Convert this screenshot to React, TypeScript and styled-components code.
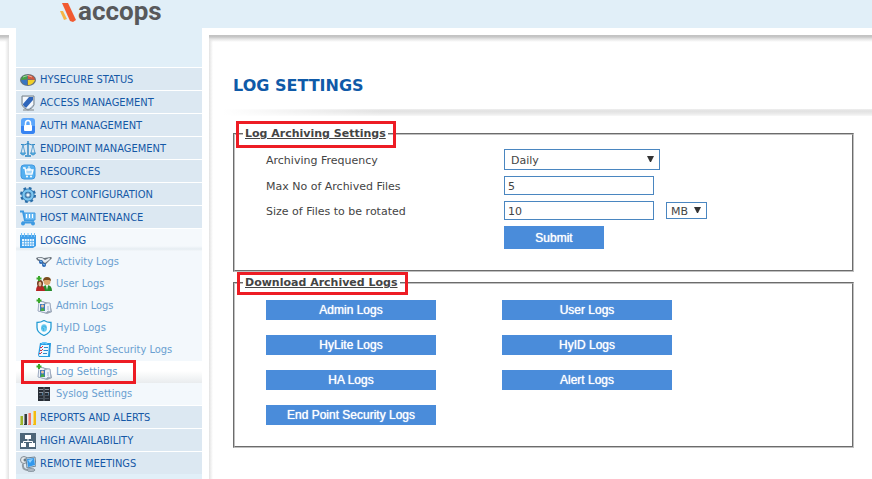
import React from "react";
import styled, { createGlobalStyle, css } from "styled-components";

const GlobalStyle = createGlobalStyle`
  * { box-sizing: border-box; }
  html, body, #root { margin: 0; min-height: 100vh; }
  body {
    background: #fff;
    color: #444;
    font-family: Verdana, "DejaVu Sans", sans-serif;
    font-size: 11px;
  }
`;

const Page = styled.div`
  display: flex;
  flex-direction: column;
  min-height: 100vh;
`;

const Header = styled.header`
  display: flex;
  height: 28px;
  padding-left: 60px;
  background: #e1eff8;
`;

const Brand = styled.a`
  display: flex;
  align-items: flex-start;
  color: #58595b;
  text-decoration: none;
`;

const BrandMark = styled.svg`
  width: 18px;
  height: 24px;
`;

const BrandName = styled.span`
  font: bold 26px/22px Roboto, sans-serif;
`;

const Body = styled.div`
  display: flex;
  flex: 1;
`;

const topShadow = "linear-gradient(#c3c3c3 0 1px, #c8c8c8 2px, #e4e4e4 4px, rgba(255,255,255,0) 7px)";

const Gutter = styled.div`
  width: 9px;
  margin-top: 7px;
  background: ${topShadow}, linear-gradient(to left, #e2e2e2, #fff 4px);
`;

const Sidebar = styled.nav`
  width: 200px;
  flex-shrink: 0;
  padding-top: 39px;
  border: solid #fff;
  border-width: 0 7px;
  background: #e1eff8;
`;

const Menu = styled.ul`
  margin: 0;
  padding: 0;
  list-style: none;
  font-family: Tahoma, "DejaVu Sans Condensed", "DejaVu Sans", sans-serif;
`;

const MenuLink = styled.a<{ $open?: boolean }>`
  display: flex;
  gap: 4px;
  height: 23px;
  padding-left: 4px;
  border-top: 1px solid #fff;
  background: ${(p) => (p.$open ? "linear-gradient(#f5f9fc 17px, #e6edf2 20px, #f3f7fa)" : "#dce8f2")};
  color: #1558a6;
  line-height: 24px;
  text-decoration: none;
  white-space: nowrap;

  svg { margin-top: 4px; }
`;

const SubLink = styled.a<{ $current?: boolean }>`
  position: relative;
  display: flex;
  gap: 4px;
  height: 22px;
  padding-left: 20px;
  background: ${(p) => (p.$current ? "linear-gradient(#fff 45%, #e9ecee)" : "#f3f8fc")};
  color: #6a9fd0;
  line-height: 22px;
  text-decoration: none;
  white-space: nowrap;

  svg { margin-top: 3px; }

  ${(p) => p.$current && css`
    z-index: 1;

    &::after {
      content: "";
      position: absolute;
      inset: -1px 66px -1px 5px;
      border: 3px solid #ed1c24;
    }
  `}
`;

const IconSvg = styled.svg`
  width: 16px;
  height: 16px;
  flex-shrink: 0;
`;

const Main = styled.main`
  flex: 1;
  min-width: 0;
  margin-top: 7px;
  padding-bottom: 24px;
  background: ${topShadow}, linear-gradient(to right, #e2e2e2, #fff 4px);
`;

const Title = styled.h1`
  margin: 0;
  padding: 41px 24px 13px;
  color: #0f5aa8;
  font-size: 16px;
  line-height: 20px;
`;

const Rule = styled.div`
  height: 7px;
  margin-left: 14px;
  background:
    linear-gradient(to right, #fff, rgba(255,255,255,0) 160px),
    linear-gradient(#efefef, #e1e1e1 2px, #ececec 5px, #f8f8f8);
`;

const Panels = styled.div`
  display: flex;
  flex-direction: column;
  gap: 4px;
  padding: 11px 18px 0 24px;
`;

const Panel = styled.fieldset`
  min-width: 0;
  margin: 0;
  padding: 0 8px 21px;
  border: 2px groove #c0c0c0;
`;

const Legend = styled.legend<{ $tall?: boolean }>`
  position: relative;
  padding: 0 2px;
  font-weight: bold;
  line-height: 14px;
  text-decoration: underline;

  &::after {
    content: "";
    position: absolute;
    inset: ${(p) => (p.$tall ? "-6px -8px -7px -7px" : "-4px -8px -5px -6px")};
    border: 3px solid #ed1c24;
  }
`;

const Form = styled.form`
  display: grid;
  grid-template-columns: 238px 1fr;
  align-items: center;
  row-gap: 6px;
  padding: 8px 0 0 23px;
`;

const Label = styled.label`
  padding-top: 2px;
`;

const FieldRow = styled.div`
  display: flex;
  align-items: center;
  gap: 12px;
`;

const field = css`
  border: 1px solid #4a86c0;
  border-radius: 0;
  background: #fff;
  color: #444;
  font: inherit;
`;

const TextInput = styled.input`
  ${field}
  width: 150px;
  height: 19px;
  padding: 2px 3px 0;
`;

const SelectBox = styled.span<{ $compact?: boolean }>`
  position: relative;
  display: block;
  width: ${(p) => (p.$compact ? 41 : 156)}px;
  height: ${(p) => (p.$compact ? 17 : 21)}px;

  select {
    ${field}
    display: block;
    appearance: none;
    width: 100%;
    height: 100%;
    padding: 2px ${(p) => (p.$compact ? 4 : 6)}px 0;
  }

  svg {
    position: absolute;
    top: calc(50% - 4px);
    right: 6px;
    width: 7px;
    height: 6px;
    pointer-events: none;
  }
`;

const Button = styled.button<{ $submit?: boolean }>`
  width: ${(p) => (p.$submit ? 100 : 170)}px;
  height: ${(p) => (p.$submit ? 23 : 20)}px;
  padding: 0;
  border: 0;
  background: #4a8cda;
  color: #fff;
  font: 12px/20px "Liberation Sans", Arial, sans-serif;
  text-shadow: 0 0 1px #fff;
`;

const SubmitCell = styled.div`
  grid-column: 2;
`;

const Downloads = styled.div`
  display: grid;
  grid-template-columns: 170px 170px;
  gap: 15px 66px;
  padding: 10px 0 0 23px;
`;

const icons: Record<string, React.ReactNode> = {
  status: (
    <>
      <ellipse cx="8" cy="8" rx="8" ry="6" fill="#667078" />
      <path d="M7 7V3Q2 3 1 8Z" fill="#41a445" />
      <path d="M8 7V3Q14 3 15 8Z" fill="#d4573c" />
      <path d="M7 8 1 8Q2 13 7 13Z" fill="#3976c1" />
      <path d="M8 8h7Q13 13 8 13Z" fill="#f1cf28" />
      <path d="M3 5Q8 2 12 5" stroke="#fff" strokeOpacity=".5" fill="none" />
    </>
  ),
  shield: (
    <>
      <path d="M3 15h11" stroke="#8d9499" strokeOpacity=".6" strokeWidth="2" />
      <path d="M2 1h12v9q-1 3-6 5q-5-2-6-5Z" fill="#dfe4e8" stroke="#77828b" />
      <path d="M3 2h10v8q-1 2-5 4q-4-2-5-4Z" fill="#2f66bb" />
      <path d="M3 2h6L3 9ZM13 5v5q-1 2-5 4l-2-1Z" fill="#f4f8fd" />
    </>
  ),
  lock: (
    <>
      <rect x="1" width="14" height="16" rx="3" fill="#5aa5fb" />
      <path d="M1 8h14v5q0 3-3 3H4q-3 0-3-3Z" fill="#3683f2" />
      <path d="M5.500 8V5.500q0-3 2.500-3t2.500 3V8" fill="none" stroke="#fff" strokeWidth="1.500" />
      <rect x="4" y="7" width="8" height="6" rx="1" fill="#fff" />
    </>
  ),
  scales: (
    <g fill="none" stroke="#2784c4">
      <path d="M8 0v14M5 15h6" strokeWidth="1.400" />
      <path d="M1 3.500q4 1 7-1 3 2 7 1" />
      <path d="M3 4 1 12M3 4l2 8M13 4l-2 8M13 4l2 8" strokeWidth=".7" />
      <path d="M.5 12h5q-1 2-2.500 2t-2.500-2ZM10.500 12h5q-1 2-2.500 2t-2.500-2Z" fill="#6cc3ee" strokeWidth=".8" />
    </g>
  ),
  resources: (
    <>
      <rect x="1" y="1" width="14" height="14" rx="3" fill="#55b0f0" stroke="#3f97e0" />
      <path d="M3 4h2l1 6h6l1-4H5" fill="none" stroke="#fff" strokeWidth="1.300" />
      <path d="M9 2v5M7 5h4M6 8h6" stroke="#fff" />
      <circle cx="7" cy="12.500" r="1" fill="#fff" />
      <circle cx="11" cy="12.500" r="1" fill="#fff" />
    </>
  ),
  gear: (
    <>
      <circle cx="8" cy="8" r="6.500" fill="none" stroke="#2a6da8" strokeWidth="3" strokeDasharray="2.600 2.500" />
      <circle cx="8" cy="8" r="4.500" fill="none" stroke="#286ea8" strokeWidth="4" />
      <circle cx="8" cy="8" r="4.500" fill="none" stroke="#7cc6f0" strokeWidth="2.400" />
      <circle cx="8" cy="8" r="2.200" fill="#eaf5fc" stroke="#235f95" strokeWidth=".8" />
    </>
  ),
  cart: (
    <>
      <path d="M0 1.500h3l2 9h9" fill="none" stroke="#3e9ae2" strokeWidth="2" />
      <path d="M4 3h11v7H5Z" fill="#74bff5" stroke="#3e9ae2" />
      <path d="M6.500 4v4M9.500 4v4M12.500 4v4" stroke="#fff" />
      <path d="M2 12.500h12" stroke="#3e9ae2" strokeWidth="2" />
      <circle cx="3" cy="13.500" r="2" fill="#3e9ae2" />
      <circle cx="13" cy="13.500" r="2" fill="#3e9ae2" />
    </>
  ),
  calendar: (
    <>
      <path d="M0 2h16v11l-3 2H0Z" fill="#42a0ea" />
      <path d="M1.500 0v4M4.500 0v4M8 0v4M11.500 0v4M14.500 0v4" stroke="#78c2f6" />
      <path d="M2 6h12v7H2Z" fill="#e9f6ff" />
      <path d="M2 8.500h12M2 11h12M4.500 6v7M7 6v7M9.500 6v7M12 6v7" stroke="#54abed" strokeWidth=".8" />
    </>
  ),
  activity: (
    <>
      <path d="M0 4q4-2 8 0l7-1q2 1-1 3l-4 4-2 2q-2-1-2-3L1 6Z" fill="#6b747d" />
      <path d="M2 4q4-1 7 2l4-2q2 0 0 2L9 9Q6 6 2 5Z" fill="#e7edf2" />
      <circle cx="5" cy="8" r="2" fill="#2766b5" />
      <circle cx="8" cy="11" r="2" fill="#2766b5" />
      <path d="M4 7l2 1M7 10l2 1" stroke="#86c3f1" />
    </>
  ),
  users: (
    <>
      <path d="M6 15q0-6 5-6t5 6Z" fill="#278c2d" />
      <circle cx="11" cy="5.500" r="3.500" fill="#dda66d" />
      <path d="M7 5q0-4 4-4t4 4l-2-1H9Z" fill="#7b4b1d" />
      <path d="M10 9h2l-1 5Z" fill="#fff" />
      <path d="M0 15q0-6 4-6t5 6Z" fill="#b62524" />
      <ellipse cx="4" cy="7.500" rx="3" ry="3.500" fill="#733b21" />
      <ellipse cx="4" cy="8" rx="1.500" ry="2.500" fill="#e8b990" />
      <path d="M3 0v5M.5 2.500h5" stroke="#39a829" strokeWidth="2" />
    </>
  ),
  badge: (
    <>
      <path d="M5 3l9 2 2 9-5 2-9-3Z" fill="#98a2ae" />
      <path d="M3 3l5 1 1 2 2-1 3 0 1 9-3-1-2 2-8-2Z" fill="#eef3fa" stroke="#9eabc0" />
      <rect x="4" y="6" width="5" height="7" fill="#3b78bd" />
      <circle cx="6.500" cy="8" r="1.500" fill="#edc49d" />
      <path d="M4.500 13q0-3 2-3t2 3Z" fill="#4aa844" />
      <path d="M11 9h2M11 11h2" stroke="#a3b3d1" />
      <path d="M3 0v5M.5 2.500h5" stroke="#39a829" strokeWidth="2" />
    </>
  ),
  hyid: (
    <>
      <path d="M8 .5q3 2 7 2v5q0 5-7 8q-7-3-7-8v-5q4 0 7-2Z" fill="#f8fdff" stroke="#259cd4" strokeWidth="1.300" />
      <ellipse cx="8" cy="8" rx="3" ry="3.800" fill="#67caf0" />
      <path d="M6 9q0-3 2-3t2 2M7.500 11V8" fill="none" stroke="#36aee0" strokeWidth=".8" />
    </>
  ),
  checklist: (
    <>
      <path d="M4 1h11l-1 14H3L2 13Z" fill="#269be0" />
      <path d="M5 3h8l-1 11H3Z" fill="#eaf7ff" />
      <path d="M4 5l1 1 2-2M4 8l1 1 2-2M3 11l1 1 2-2" fill="none" stroke="#ce3148" />
      <path d="M8 5.500h4M7.500 8.500H12M7 11.500h4" stroke="#2b89ce" />
      <path d="M6 2q2-3 5 0" stroke="#63c5fa" fill="none" strokeWidth="2" />
    </>
  ),
  server: (
    <>
      <path d="M2 1h12v14H2Z" fill="#272d35" />
      <path d="M3 3.500h4M9 3.500h4M3 6.500h4M9 6.500h4" stroke="#86919d" />
      <path d="M3 9.500h4M9 9.500h4M3 12.500h4M9 12.500h4" stroke="#4a545f" />
      <path d="M8 1v14" stroke="#8b959f" strokeWidth=".7" />
      <path d="M6 8h1M12 8h1" stroke="#67baf1" />
    </>
  ),
  bars: (
    <>
      <rect y="6" width="3" height="9" fill="#9cb32b" />
      <rect x="4" y="4" width="3" height="11" fill="#343b3d" />
      <rect x="8" y="3" width="3" height="12" fill="#f4776b" />
      <rect x="13" y="1" width="3" height="14" fill="#f2bc12" />
      <path d="M.5 6v8M4.500 4v10M8.500 3v11M13.500 1v13" stroke="#fff" strokeOpacity=".4" />
    </>
  ),
  network: (
    <>
      <rect width="16" height="16" fill="#4d6578" />
      <path d="M8 6v3M3.500 11V8.500h9V11" fill="none" stroke="#fff" />
      <rect x="5" y="2" width="6" height="4" fill="#fff" />
      <rect x="1" y="10" width="5" height="4" fill="#fff" />
      <rect x="9" y="10" width="6" height="4" fill="#fff" />
    </>
  ),
  meeting: (
    <>
      <circle cx="4" cy="4" r="3.500" fill="#e3e8eb" stroke="#818b94" />
      <circle cx="5" cy="4" r="1.500" fill="#657784" />
      <path d="M3 8q-1 5 4 6" fill="none" stroke="#909ba4" strokeWidth="2" />
      <path d="M6 2l9-1 1 9-9 2Z" fill="#d6dfe8" stroke="#6c8497" />
      <path d="M7 3l7-1 1 7-7 2Z" fill="#3299ed" />
      <path d="M8 4l5-1-3 4Z" fill="#91d3ff" />
      <ellipse cx="11" cy="14" rx="4" ry="1.500" fill="#b3bec8" stroke="#71818d" strokeWidth=".7" />
    </>
  ),
};

const Icon = ({ name }: { name: string }) => (
  <IconSvg viewBox="0 0 16 16" aria-hidden="true">{icons[name]}</IconSvg>
);

const Arrow = () => (
  <svg viewBox="0 0 7 6" aria-hidden="true"><path d="M0 0h7L4 6H3Z" fill="#333" /></svg>
);

type Entry = { label: string; icon: string; current?: boolean; children?: Entry[] };

const menu: Entry[] = [
  { label: "HYSECURE STATUS", icon: "status" },
  { label: "ACCESS MANAGEMENT", icon: "shield" },
  { label: "AUTH MANAGEMENT", icon: "lock" },
  { label: "ENDPOINT MANAGEMENT", icon: "scales" },
  { label: "RESOURCES", icon: "resources" },
  { label: "HOST CONFIGURATION", icon: "gear" },
  { label: "HOST MAINTENANCE", icon: "cart" },
  {
    label: "LOGGING",
    icon: "calendar",
    children: [
      { label: "Activity Logs", icon: "activity" },
      { label: "User Logs", icon: "users" },
      { label: "Admin Logs", icon: "badge" },
      { label: "HyID Logs", icon: "hyid" },
      { label: "End Point Security Logs", icon: "checklist" },
      { label: "Log Settings", icon: "badge", current: true },
      { label: "Syslog Settings", icon: "server" },
    ],
  },
  { label: "REPORTS AND ALERTS", icon: "bars" },
  { label: "HIGH AVAILABILITY", icon: "network" },
  { label: "REMOTE MEETINGS", icon: "meeting" },
];

const downloads = ["Admin Logs", "User Logs", "HyLite Logs", "HyID Logs", "HA Logs", "Alert Logs", "End Point Security Logs"];

export default function App() {
  return (
    <Page>
      <GlobalStyle />
      <Header>
        <Brand href="#">
          <BrandMark viewBox="0 0 18 24" aria-hidden="true">
            <path d="M2 3h6l8 17-3 2-3-1Z" fill="#f15a31" />
            <path d="M0 11h3l4 8-3 1Z" fill="#f6b545" />
          </BrandMark>
          <BrandName>accops</BrandName>
        </Brand>
      </Header>
      <Body>
        <Gutter />
        <Sidebar aria-label="Main menu">
          <Menu>
            {menu.map((item) => (
              <li key={item.label}>
                <MenuLink href="#" $open={!!item.children}>
                  <Icon name={item.icon} />
                  {item.label}
                </MenuLink>
                {item.children && (
                  <Menu>
                    {item.children.map((sub) => (
                      <li key={sub.label}>
                        <SubLink href="#" $current={sub.current} aria-current={sub.current ? "page" : undefined}>
                          <Icon name={sub.icon} />
                          {sub.label}
                        </SubLink>
                      </li>
                    ))}
                  </Menu>
                )}
              </li>
            ))}
          </Menu>
        </Sidebar>
        <Main>
          <Title>LOG SETTINGS</Title>
          <Rule />
          <Panels>
            <Panel>
              <Legend $tall>Log Archiving Settings</Legend>
              <Form onSubmit={(e) => e.preventDefault()}>
                <Label htmlFor="frequency">Archiving Frequency</Label>
                <SelectBox>
                  <select id="frequency" defaultValue="Daily"><option>Daily</option></select>
                  <Arrow />
                </SelectBox>
                <Label htmlFor="max-files">Max No of Archived Files</Label>
                <TextInput id="max-files" defaultValue="5" />
                <Label htmlFor="max-size">Size of Files to be rotated</Label>
                <FieldRow>
                  <TextInput id="max-size" defaultValue="10" />
                  <SelectBox $compact>
                    <select aria-label="Size unit" defaultValue="MB"><option>MB</option></select>
                    <Arrow />
                  </SelectBox>
                </FieldRow>
                <SubmitCell><Button type="submit" $submit>Submit</Button></SubmitCell>
              </Form>
            </Panel>
            <Panel>
              <Legend>Download Archived Logs</Legend>
              <Downloads>
                {downloads.map((name) => <Button type="button" key={name}>{name}</Button>)}
              </Downloads>
            </Panel>
          </Panels>
        </Main>
      </Body>
    </Page>
  );
}
